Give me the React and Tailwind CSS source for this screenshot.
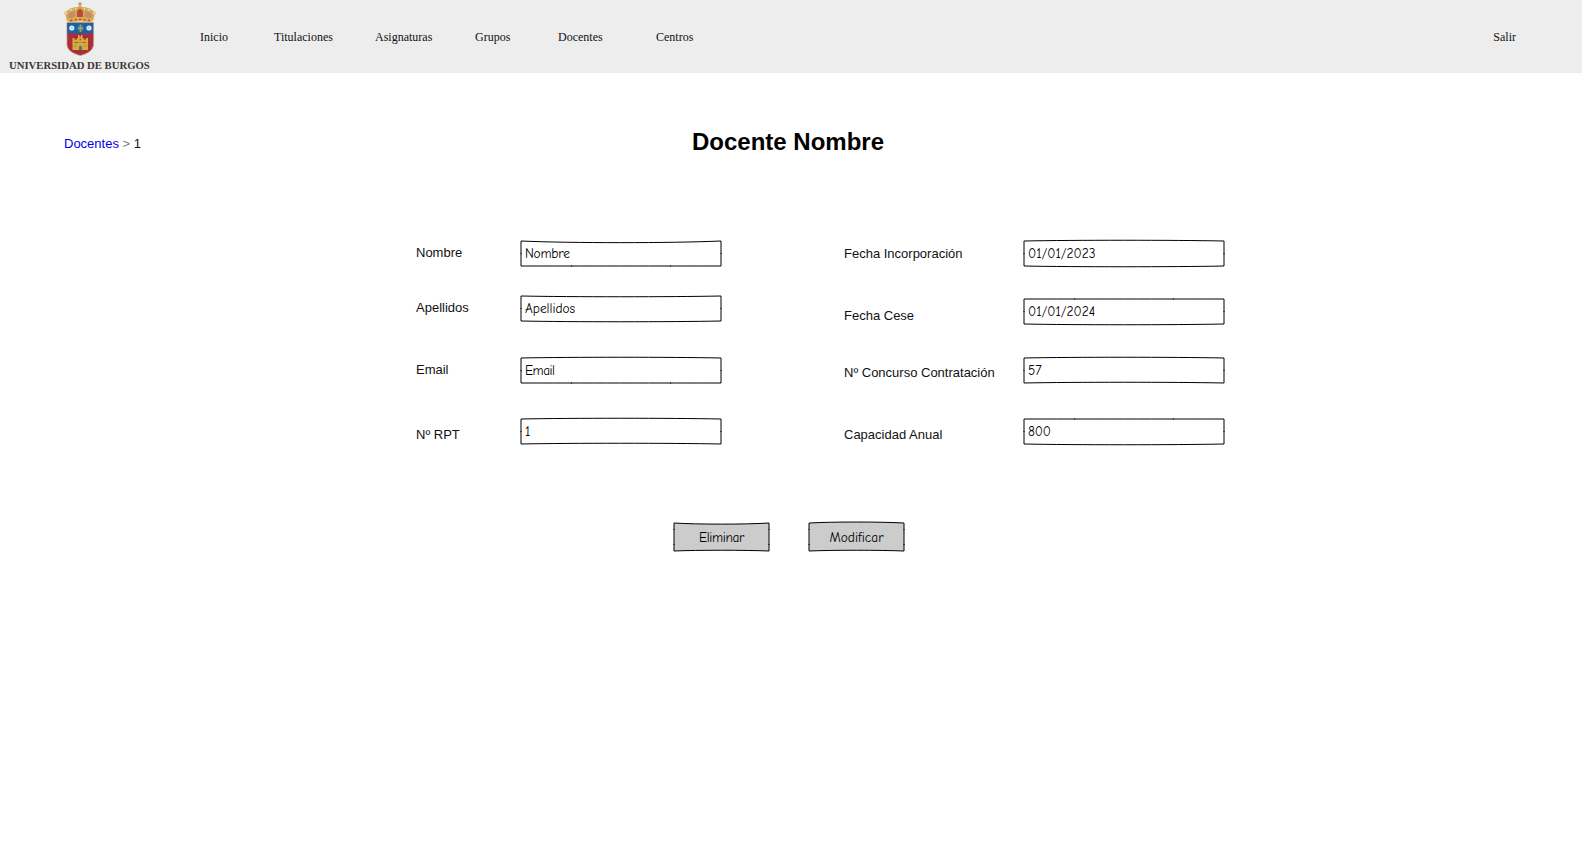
const NAV = [
  { label: 'Inicio', className: 'w-[74px]' },
  { label: 'Titulaciones', className: 'w-[101px]' },
  { label: 'Asignaturas', className: 'w-[100px]' },
  { label: 'Grupos', className: 'w-[83px]' },
  { label: 'Docentes', className: 'w-[98px]' },
  { label: 'Centros', className: 'w-[60px]' },
];

const HAND =
  "font-['Comic_Neue','Comic_Sans_MS','Comic_Relief',Lato,sans-serif] text-[13.4px] leading-[16px] text-black";

// `top` and `bottom` are the vertical bends of the two long edges; 0 draws a straight edge with joints.
const LEFT_FIELDS = [
  { label: 'Nombre', value: 'Nombre', top: 2.2, bottom: 0, row: '', labelPos: 'pt-[4px]', valuePos: 'pl-[4px] pt-[5px] tracking-[-0.2px]' },
  { label: 'Apellidos', value: 'Apellidos', top: 1, bottom: 1, row: 'mt-[30px]', labelPos: 'pt-[4px]', valuePos: 'pl-[4px] pt-[5px]' },
  { label: 'Email', value: 'Email', top: -1, bottom: 0, row: 'mt-[37px]', labelPos: 'pt-[4px]', valuePos: 'pl-[4px] pt-[5px] tracking-[-0.5px]' },
  { label: 'Nº RPT', value: '1', top: -1, bottom: -1, row: 'mt-[36px]', labelPos: 'pt-[8px]', valuePos: 'pl-[4px] pt-[5px]' },
];

const RIGHT_FIELDS = [
  { label: 'Fecha Incorporación', value: '01/01/2023', top: -1, bottom: 1, row: '', labelPos: 'pt-[5px]', valuePos: 'pl-[4px] pt-[5px]' },
  { label: 'Fecha Cese', value: '01/01/2024', top: 0, bottom: 1, row: 'mt-[33px]', labelPos: 'pt-[9px]', valuePos: 'pl-[4px] pt-[5px]' },
  { label: 'Nº Concurso Contratación', value: '57', top: -1, bottom: -1, row: 'mt-[34px]', labelPos: 'pt-[7px]', valuePos: 'pl-[4px] pt-[5px]' },
  { label: 'Capacidad Anual', value: '800', top: 0, bottom: 1, row: 'mt-[36px]', labelPos: 'pt-[8px]', valuePos: 'pl-[4px] pt-[5px] tracking-[-0.2px]' },
];

function SketchFrame({ width, height, top, bottom, fill, ticks }) {
  const a = width * 0.25;
  const b = width * 0.745;
  const d = `M0 0C${a} ${top} ${b} ${top} ${width} 0L${width} ${height}C${b} ${height + bottom} ${a} ${height + bottom} 0 ${height}Z`;
  return (
    <svg className="absolute left-0 top-0 overflow-visible" width={width} height={height} aria-hidden="true">
      <path d={d} fill={fill} stroke="#000" strokeLinejoin="round" />
      <g fill="#000" fillOpacity=".5">
        {ticks.map((y) => (
          <g key={y}>
            <rect x="-1" y={y} width="2" height="1" />
            <rect x={width - 1} y={y} width="2" height="1" />
          </g>
        ))}
        {top === 0 && <path d="M50-1h1v2h-1zM149-1h1v2h-1z" />}
        {bottom === 0 && <path d={`M50 ${height - 1}h1v2h-1zM149 ${height - 1}h1v2h-1z`} />}
      </g>
    </svg>
  );
}

function Field({ field, labelWidth }) {
  return (
    <div className={`flex h-[25px] ${field.row}`}>
      <label className={`${labelWidth} ${field.labelPos} h-[25px] whitespace-nowrap text-[13px] leading-[16px]`}>
        {field.label}
      </label>
      <div className="relative h-[25px] w-[200px]">
        <SketchFrame width={200} height={25} top={field.top} bottom={field.bottom} fill="#fff" ticks={[12]} />
        <div className={`relative ${HAND} ${field.valuePos}`}>{field.value}</div>
      </div>
    </div>
  );
}

function SketchButton({ children, top, bottom, spacing }) {
  return (
    <button className="relative h-[28px] w-[95px]">
      <SketchFrame width={95} height={28} top={top} bottom={bottom} fill="#ccc" ticks={[6, 21]} />
      <span className={`relative block pt-[2px] text-center ${HAND} ${spacing}`}>{children}</span>
    </button>
  );
}

function Crest() {
  return (
    <svg className="block" width="36" height="54" viewBox="0 0 36 54" aria-hidden="true">
      <path d="M5 19 3 11c4-5 9-6 15-6s11 1 15 6l-2 8Q18 15 5 19z" fill="#d9a94e" />
      <path d="M7 17 6 12q4-3 7-3l1 6zM29 17l1-5q-4-3-7-3l-1 6z" fill="#c58d68" />
      <path d="M15 15V9l3-3 3 3v6z" fill="#b64a45" />
      <path d="M18 0v6M16.3 2h3.4" stroke="#b8974f" strokeWidth="1.4" />
      <circle cx="18" cy="5.5" r="1.8" fill="#d7a33e" />
      <g fill="#eee1bd" stroke="#d3a863" strokeWidth=".6">
        <circle cx="4" cy="11" r="1.4" /><circle cx="9" cy="7.7" r="1.3" />
        <circle cx="13.5" cy="6.7" r="1.1" /><circle cx="22.5" cy="6.7" r="1.1" />
        <circle cx="27" cy="7.7" r="1.3" /><circle cx="32" cy="11" r="1.4" />
      </g>
      <path d="M6 17q12-4 24 0l-.5 3.5q-11.5-2-23 0z" fill="#dfb04d" />
      <path d="M8 18.7q10-2.5 20 0" fill="none" stroke="#b1433e" strokeWidth="1.3" strokeDasharray="2.5 2" />
      <path d="M5 20.5h26.5V42c0 6.500-6 9.500-13.200 11.500C11 51.500 5 48.500 5 42z" fill="#a92e39" stroke="#b99b86" strokeWidth=".8" />
      <path d="M5.400 21h25.700v10.500H5.400z" fill="#1763a8" />
      <circle cx="9.800" cy="26" r="2.600" fill="#dce9f2" /><circle cx="9.800" cy="26" r="1" fill="#b4cfdf" />
      <circle cx="27" cy="26" r="2.600" fill="#dce9f2" /><circle cx="27" cy="26" r="1" fill="#b4cfdf" />
      <path d="M18.500 22.500v7.500M15.800 26.200h5.400" stroke="#a6a462" strokeWidth="1.500" />
      <circle cx="18.500" cy="26.200" r="2.300" fill="none" stroke="#829475" />
      <path d="M10.500 48V36h2v1.500h2.500V36h1v-3h1.500v1.500h1.500V33h1.500v3h1v1.500h2.500V36h2v12z" fill="#d9aa3d" />
      <path d="M12 40.500h13M12 44h3M22 44h3" stroke="#b47b36" strokeWidth=".8" />
      <path d="M17 48v-3.500q1.500-2 3 0V48z" fill="#52767c" />
      <path d="M13.500 40.500h1.300M21.700 40.500H23M17.700 37.500h1.300" stroke="#756140" strokeWidth="1.300" />
    </svg>
  );
}

export default function App() {
  return (
    <div className="h-[858px] w-[1582px] overflow-hidden bg-white font-['Liberation_Sans',Arial,sans-serif] text-[#111]">
      <header className="flex h-[73px] bg-[#ededed] font-['Liberation_Serif','Times_New_Roman',serif] text-[12px] leading-[14px]">
        <div className="flex w-[200px] flex-col pt-[2px]">
          <div className="pl-[62px]"><Crest /></div>
          <div className="whitespace-nowrap pl-[9px] pt-[3px] text-[10.7px] font-bold leading-[13px] text-[#3c3636]">
            UNIVERSIDAD DE BURGOS
          </div>
        </div>
        <nav className="flex pt-[30px]">
          {NAV.map((item) => (
            <a key={item.label} className={item.className}>{item.label}</a>
          ))}
        </nav>
        <a className="ml-auto mr-[66px] pt-[30px]">Salir</a>
      </header>

      <main>
        <div className="flex h-[168px] pl-[64px] pt-[55px]">
          <div className="w-[628px] whitespace-pre pt-[8px] text-[13px] leading-[16px]">
            <a className="text-[#0000ee]">Docentes</a>
            <span className="text-[#808080]">{' > '}</span>
            <span>1</span>
          </div>
          <h1 className="text-[24px] font-bold leading-[28px] text-black">Docente Nombre</h1>
        </div>

        <div className="flex pl-[416px]">
          <div className="w-[428px]">
            {LEFT_FIELDS.map((f) => <Field key={f.label} field={f} labelWidth="w-[105px]" />)}
          </div>
          <div>
            {RIGHT_FIELDS.map((f) => <Field key={f.label} field={f} labelWidth="w-[180px]" />)}
          </div>
        </div>

        <div className="flex gap-[40px] pl-[674px] pt-[79px]">
          <SketchButton top={1.5} bottom={-1} spacing="tracking-[-0.35px]">Eliminar</SketchButton>
          <SketchButton top={-1.3} bottom={-1} spacing="tracking-[0px]">Modificar</SketchButton>
        </div>
      </main>
    </div>
  );
}
